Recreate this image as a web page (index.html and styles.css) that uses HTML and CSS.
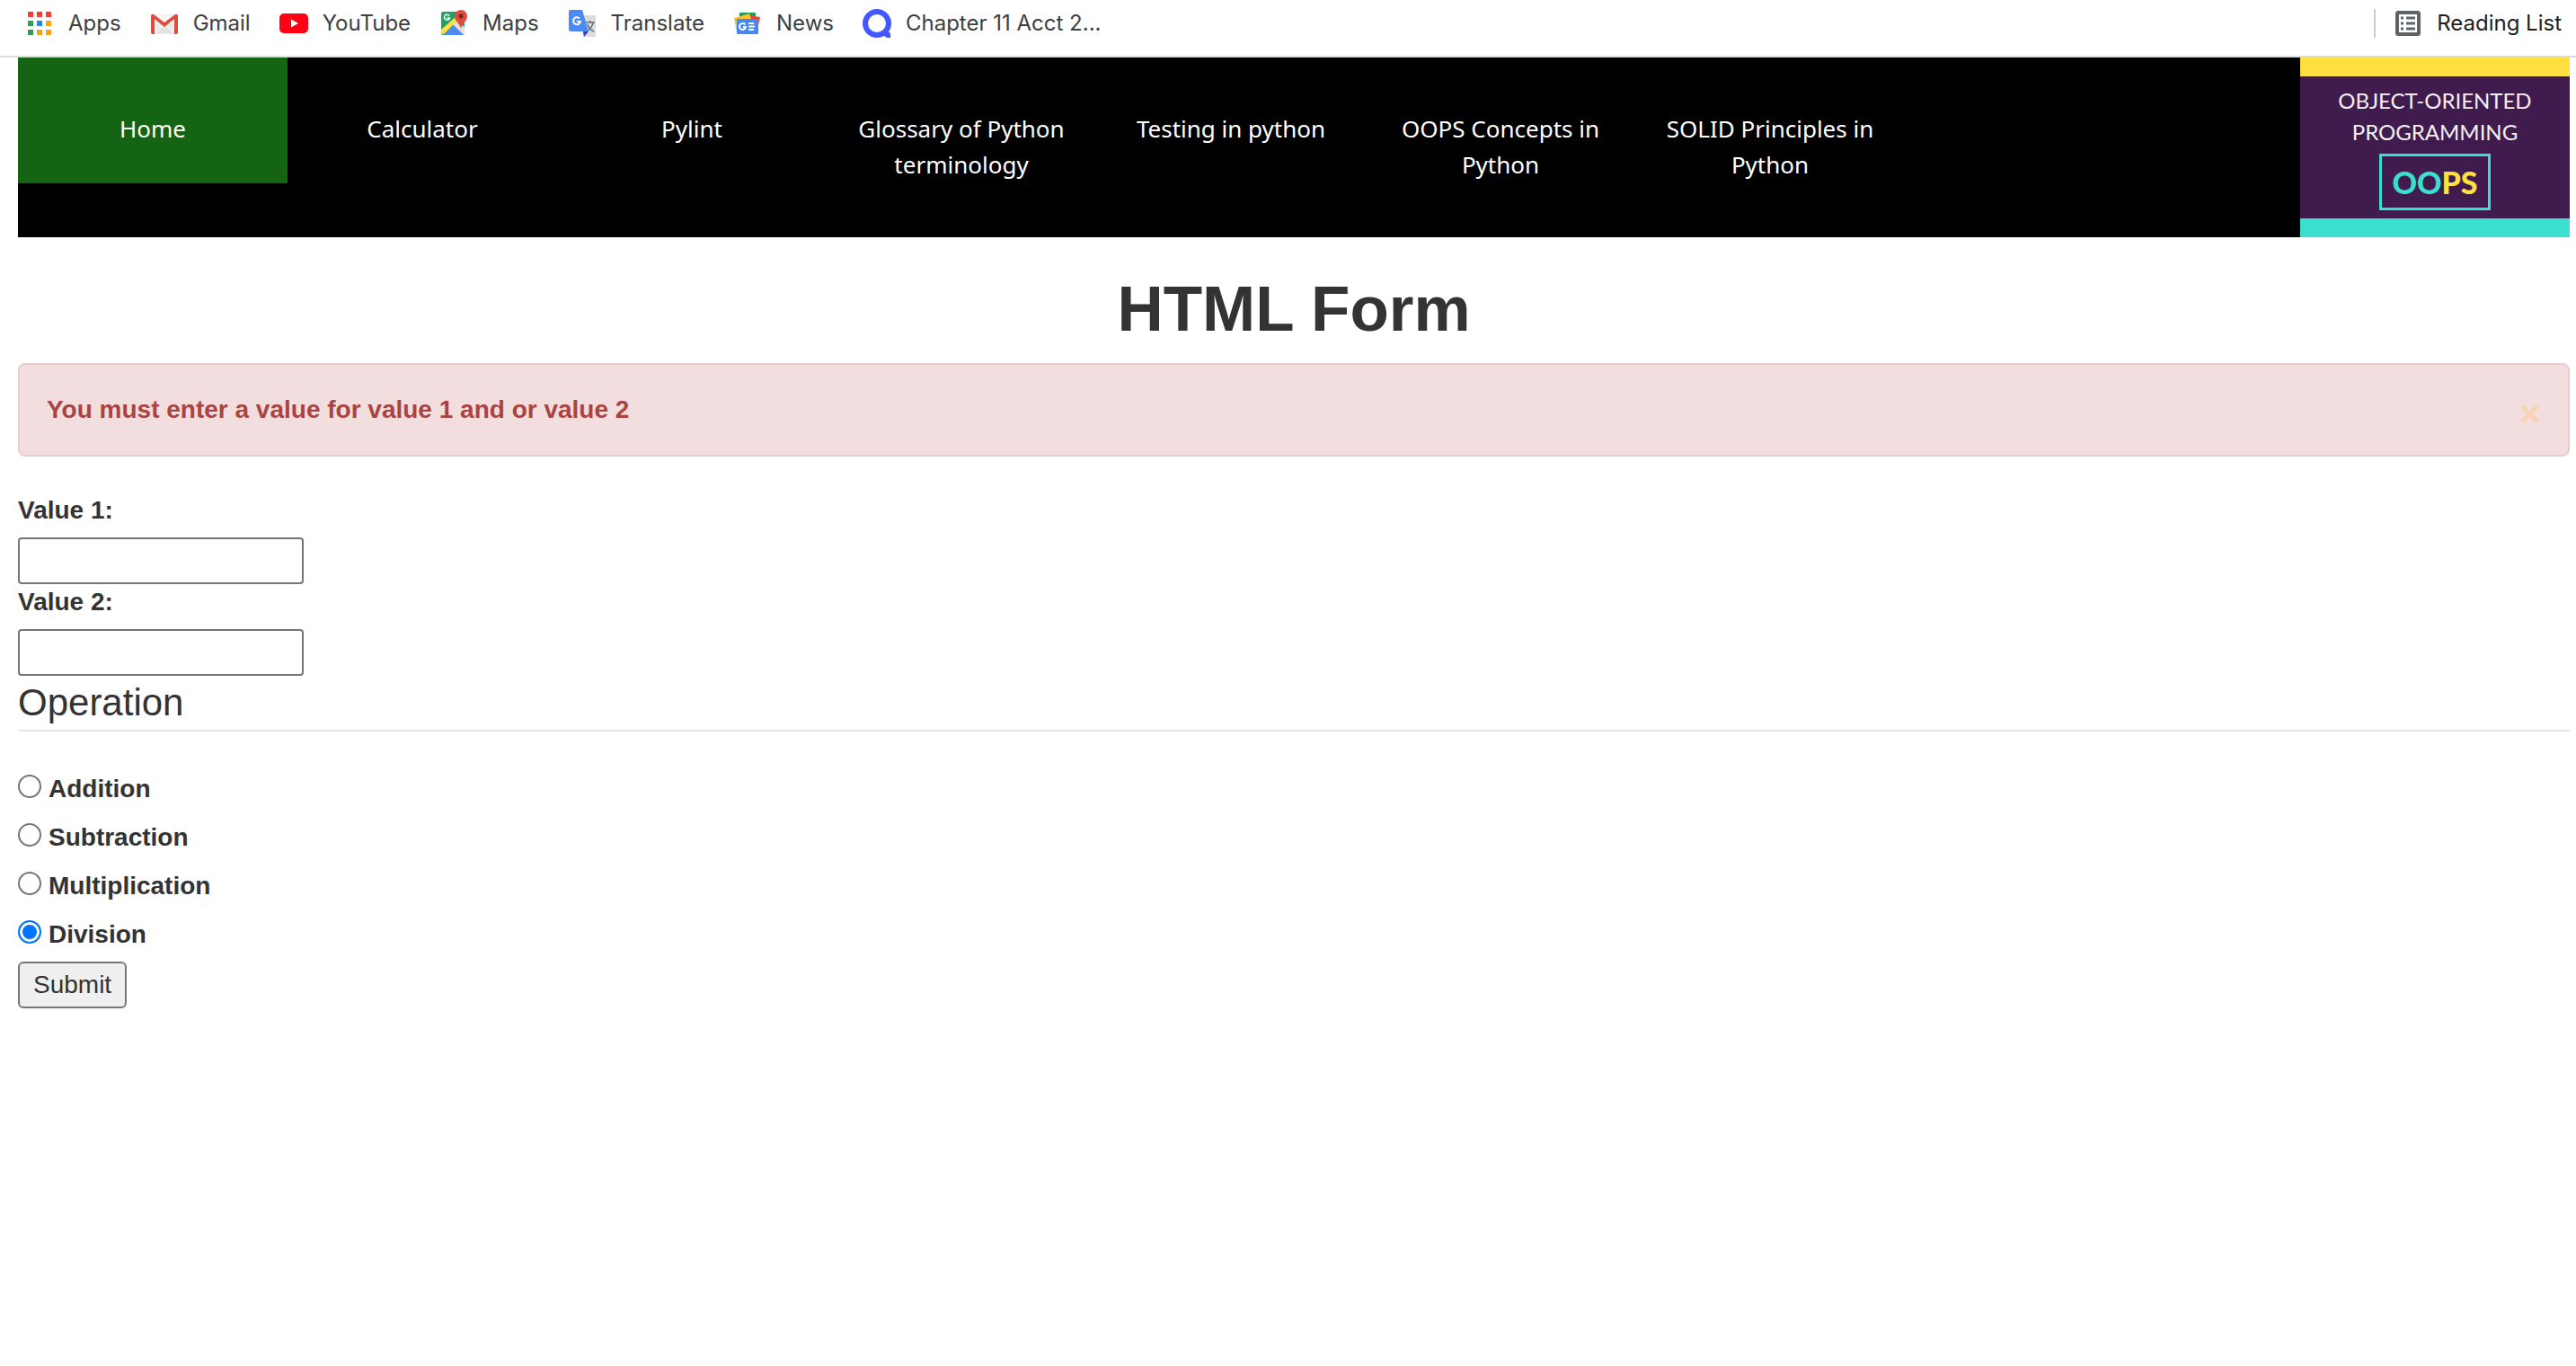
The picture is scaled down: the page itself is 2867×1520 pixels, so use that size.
FILE: index.html
```html
<!DOCTYPE html>
<html lang="en">
<head>
<meta charset="utf-8">
<meta name="viewport" content="width=device-width, initial-scale=1">
<title>HTML Form</title>
<link rel="stylesheet" href="styles.css">
</head>
<body>
<header class="bookmarks">
  <nav class="bookmark-list" aria-label="Bookmarks">
    <a class="bookmark" href="#">
      <svg class="icon" viewBox="0 0 32 32" aria-hidden="true"><path fill="#fb3b30" d="M3 3h6v6H3zM13 3h6v6h-6zM23 3h6v6h-6z"/><path fill="#2f9e58" d="M3 13h6v6H3zM3 23h6v6H3z"/><path fill="#1e88f5" d="M13 13h6v6h-6z"/><path fill="#f3a514" d="M23 13h6v6h-6zM13 23h6v6h-6zM23 23h6v6h-6z"/></svg>
      <span>Apps</span>
    </a>
    <a class="bookmark" href="#">
      <svg class="icon" viewBox="0 0 32 32" aria-hidden="true"><rect x="2" y="6" width="28" height="22" rx="2" fill="#ececec"/><path d="M5 27l11-10 11 10" fill="#e2e2e2" stroke="#fff"/><path d="M4 7h24L16 17z" fill="#f7f7f7"/><path d="M1 8q0-3 3-2l12 9 12-9q3-1 3 2v18q0 2-2 2h-2V11L16 20 5 11v17H3q-2 0-2-2z" fill="#dd4b3e"/></svg>
      <span>Gmail</span>
    </a>
    <a class="bookmark" href="#">
      <svg class="icon" viewBox="0 0 32 32" aria-hidden="true"><rect y="5" width="32" height="22" rx="5" fill="#ff0014"/><path d="M13 11.500l8 4.500-8 4.500z" fill="#fff"/></svg>
      <span>YouTube</span>
    </a>
    <a class="bookmark" href="#">
      <svg class="icon" viewBox="0 0 32 32" aria-hidden="true"><rect x="2" y="3" width="26" height="26" rx="2" fill="#1fa463"/><path d="M18 12L28 20v7q0 2-2 2L15 18z" fill="#e0e0e0"/><path d="M5 29L16 18l11 11z" fill="#4c8bf5"/><path d="M2 23L19 8v6L5 28q-3 0-3-3z" fill="#ffe047"/><path d="M11 7.500A3 3 0 1 0 11.500 10H8.500" fill="none" stroke="#fff" stroke-width="1.500"/><path d="M24 22c-1-6-7-8-7-14a7 7 0 0 1 14 0c0 6-6 8-7 14z" fill="#df4b3f"/><circle cx="24" cy="8" r="2.500" fill="#7b2320"/></svg>
      <span>Maps</span>
    </a>
    <a class="bookmark" href="#">
      <svg class="icon" viewBox="0 0 32 32" aria-hidden="true"><path d="M14 7h15q2 0 2 2v20q0 2-2 2H17z" fill="#dcdcdc"/><path d="M20 15h10M25 13v2M28 15q-1 6-7 10M22 17q1 5 7 8" fill="none" stroke="#5b7480" stroke-width="1.500"/><path d="M17 25h6l-5 6z" fill="#3344b8"/><path d="M3 1h13l7 24H3q-2 0-2-2V3q0-2 2-2z" fill="#4c8bf5"/><path d="M13 10.500A4 4 0 1 0 14 14H10" fill="none" stroke="#fff" stroke-width="2"/></svg>
      <span>Translate</span>
    </a>
    <a class="bookmark" href="#">
      <svg class="icon" viewBox="0 0 32 32" aria-hidden="true"><rect x="7" y="4" width="18" height="12" rx="1" fill="#16a05d"/><path d="M17 7l13 2-3 14-12-4z" fill="#ea4335"/><path d="M1 10l17-5 4 12-18 9z" fill="#fbc02d"/><rect x="4" y="11" width="24" height="17" rx="1" fill="#4687f4"/><path d="M13.500 17.500A3.500 3.500 0 1 0 14 20H11M17 16h6M17 19.500h7M17 23h6" fill="none" stroke="#fff" stroke-width="2"/></svg>
      <span>News</span>
    </a>
    <a class="bookmark" href="#">
      <svg class="icon" viewBox="0 0 32 32" aria-hidden="true"><circle cx="16" cy="16" r="13" fill="none" stroke="#4257ff" stroke-width="6"/><path d="M20 27l7-3 4 3v5h-4z" fill="#4257ff"/></svg>
      <span>Chapter 11 Acct 2...</span>
    </a>
  </nav>
  <a class="bookmark reading-list" href="#">
    <svg class="icon" viewBox="0 0 32 32" aria-hidden="true"><rect x="4" y="4" width="24" height="24" rx="1" fill="none" stroke="#5f6368" stroke-width="4"/><path d="M8 10h3M14 10h10M8 16h3M14 16h10M8 22h3M14 22h10" stroke="#5f6368" stroke-width="3"/></svg>
    <span>Reading List</span>
  </a>
</header>

<main class="page">
  <nav class="menu" aria-label="Main">
    <ul class="menu-list">
      <li><a class="menu-link current" href="#">Home</a></li>
      <li><a class="menu-link" href="#">Calculator</a></li>
      <li><a class="menu-link" href="#">Pylint</a></li>
      <li><a class="menu-link" href="#">Glossary of Python terminology</a></li>
      <li><a class="menu-link" href="#">Testing in python</a></li>
      <li><a class="menu-link" href="#">OOPS Concepts in Python</a></li>
      <li><a class="menu-link" href="#">SOLID Principles in Python</a></li>
    </ul>
    <div class="banner">
      <span>OBJECT-ORIENTED</span>
      <span>PROGRAMMING</span>
      <strong class="banner-badge">OO<span class="yellow">PS</span></strong>
    </div>
  </nav>

  <h1 class="title">HTML Form</h1>

  <div class="alert" role="alert">
    <strong>You must enter a value for value 1 and or value 2</strong>
    <button class="close" type="button" aria-label="Close">×</button>
  </div>

  <form class="form">
    <label class="label" for="value1">Value 1:</label>
    <input class="text-input" type="text" id="value1" name="value1">
    <label class="label" for="value2">Value 2:</label>
    <input class="text-input" type="text" id="value2" name="value2">
    <fieldset class="operations">
      <legend class="legend">Operation</legend>
      <label class="option"><input class="radio" type="radio" name="operation" value="addition">Addition</label>
      <label class="option"><input class="radio" type="radio" name="operation" value="subtraction">Subtraction</label>
      <label class="option"><input class="radio" type="radio" name="operation" value="multiplication">Multiplication</label>
      <label class="option"><input class="radio" type="radio" name="operation" value="division" checked>Division</label>
    </fieldset>
    <button class="submit" type="submit">Submit</button>
  </form>
</main>
</body>
</html>
```
FILE: styles.css
```css
* {
  box-sizing: border-box;
}

body {
  margin: 0;
  background: #fff;
  color: #333;
  font: 28px/40px "Liberation Sans", Arial, sans-serif;
}

/* Bookmarks bar */
.bookmarks {
  display: flex;
  justify-content: space-between;
  align-items: center;
  height: 64px;
  padding: 0 16px 10px 28px;
  border-bottom: 2px solid #dcdcdc;
  font: 24px/32px Inter, sans-serif;
}

.bookmark-list {
  display: flex;
  gap: 32px;
}

.bookmark {
  display: flex;
  align-items: center;
  gap: 16px;
  color: #3c4043;
  text-decoration: none;
  white-space: nowrap;
}

.icon {
  width: 32px;
  height: 32px;
  flex: none;
}

.reading-list {
  padding-left: 20px;
  border-left: 2px solid #ccc;
  color: #202124;
}

/* Page */
.page {
  padding: 0 7px 0 20px;
}

.menu {
  display: flex;
  justify-content: space-between;
  background: #000;
}

.menu-list {
  display: flex;
  align-items: flex-start;
  margin: 0;
  padding: 0;
  list-style: none;
}

.menu-link {
  display: block;
  width: 300px;
  padding: 59px 32px 41px;
  color: #fff;
  font: 26px/40px "Noto Sans", sans-serif;
  text-align: center;
  text-decoration: none;
}

.current {
  background: #146414;
}

.banner {
  display: flex;
  flex-direction: column;
  align-items: center;
  width: 300px;
  height: 200px;
  padding-top: 9px;
  border-top: 21px solid #ffe040;
  border-bottom: 21px solid #3bdfd0;
  background: #401b4d;
  color: #f4f0f5;
  font: 24px/35px Lato, sans-serif;
}

.banner-badge {
  width: 124px;
  margin-top: 7px;
  border: 3px solid #3bdfd0;
  color: #3bdfd0;
  font: 900 34px/57px Lato, sans-serif;
  text-align: center;
}

.yellow {
  color: #ffe040;
}

.title {
  margin: 40px 0 20px;
  font-size: 71px;
  line-height: 80px;
  text-align: center;
}

.alert {
  display: flex;
  justify-content: space-between;
  align-items: center;
  margin-bottom: 40px;
  padding: 30px;
  border: 2px solid #ebccd1;
  border-radius: 8px;
  background: #f2dede;
  color: #a94442;
}

.close {
  padding: 10px 0 0;
  border: 0;
  background: none;
  color: #f8d2b8;
  font: bold 42px/30px "Liberation Sans", Arial, sans-serif;
}

.label {
  display: block;
  margin-bottom: 10px;
  font-weight: bold;
}

.text-input {
  display: block;
  width: 318px;
  height: 52px;
  padding: 2px 4px;
  border: 2px solid #767676;
  border-radius: 4px;
  background: #fff;
  color: inherit;
  font: inherit;
}

.operations {
  margin: 0;
  padding: 0;
  border: 0;
}

.legend {
  width: 100%;
  margin-bottom: 40px;
  padding: 0;
  border-bottom: 2px solid #e5e5e5;
  font-size: 42px;
  line-height: 60px;
}

.option {
  display: flex;
  align-items: flex-start;
  gap: 8px;
  padding: 4px 0 10px;
  font-weight: bold;
}

.radio {
  appearance: none;
  width: 26px;
  height: 26px;
  margin: 4px 0 0;
  border: 2px solid #767676;
  border-radius: 50%;
  background: #fff;
}

.radio:checked {
  border-color: #0075ff;
  background: #0075ff;
  box-shadow: inset 0 0 0 3px #fff;
}

.submit {
  display: block;
  height: 52px;
  padding: 0 15px;
  border: 2px solid #767676;
  border-radius: 6px;
  background: #efefef;
  color: inherit;
  font: inherit;
}
```
